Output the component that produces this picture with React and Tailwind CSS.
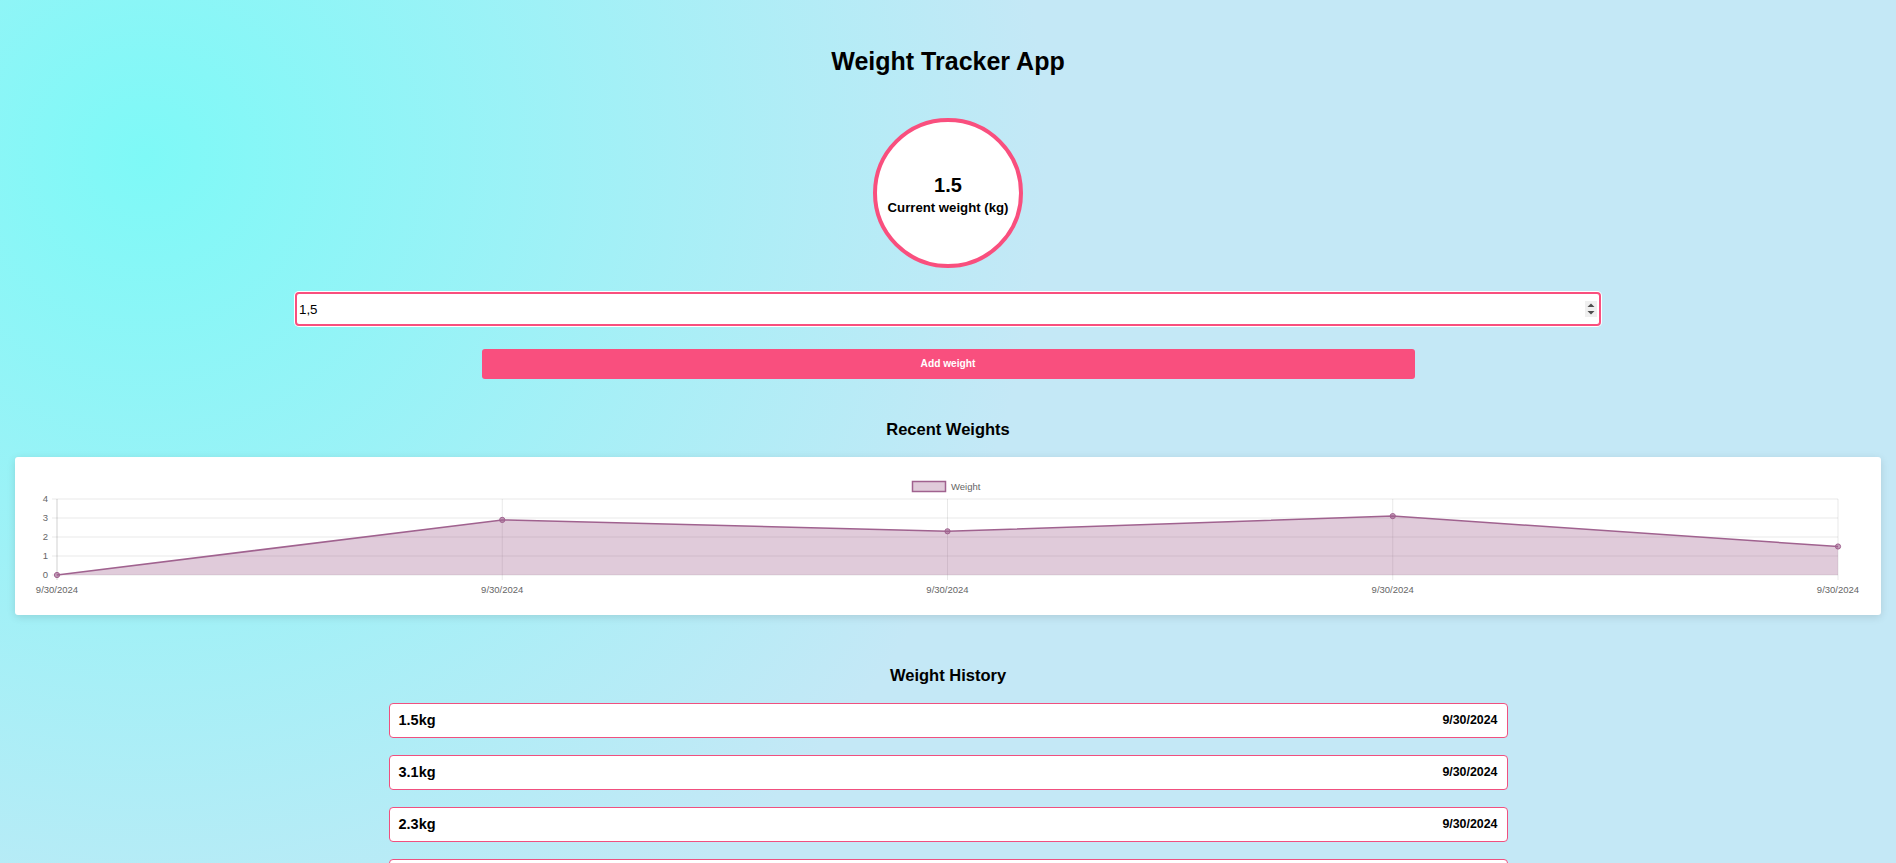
import React from "react";

const PINK = "#f94f7e";

const points = [0, 2.9, 2.3, 3.1, 1.5];
const history = [
  { w: "1.5", d: "9/30/2024" },
  { w: "3.1", d: "9/30/2024" },
  { w: "2.3", d: "9/30/2024" },
  { w: "2.9", d: "9/30/2024" },
  { w: "0", d: "9/30/2024" },
];

function WeightChart() {
  const left = 42;
  const right = 1823;
  const top = 42;
  const bottom = 118;
  const unit = (bottom - top) / 4;
  const step = (right - left) / (points.length - 1);
  const xs = points.map((_, i) => left + i * step);
  const ys = points.map((v) => bottom - v * unit);
  const line = xs.map((x, i) => `${x},${ys[i]}`).join(" ");
  const area = `${left},${bottom} ${line} ${right},${bottom}`;
  const stroke = "#a0628f";
  const fill = "rgba(160,98,143,0.33)";

  return (
    <svg className="block w-full h-[158px]" viewBox="0 0 1866 158">
      {/* legend */}
      <rect x="897.5" y="24.5" width="33" height="10" fill={fill} stroke={stroke} strokeWidth="1.5" />
      <text x="936" y="33" fontSize="9.5" fill="#666" fontFamily="Liberation Sans, Arial, sans-serif">Weight</text>

      {/* grid */}
      {[0, 1, 2, 3, 4].map((v) => (
        <g key={v}>
          <line x1={left - 5} x2={right} y1={bottom - v * unit} y2={bottom - v * unit} stroke="rgba(0,0,0,0.09)" />
          <text x={left - 9} y={bottom - v * unit + 3.3} fontSize="9.5" fill="#666" textAnchor="end" fontFamily="Liberation Sans, Arial, sans-serif">{v}</text>
        </g>
      ))}
      {xs.map((x, i) => (
        <g key={i}>
          <line x1={x} x2={x} y1={top} y2={bottom + 5} stroke={i === 0 ? "rgba(0,0,0,0.18)" : "rgba(0,0,0,0.09)"} />
          <text x={x} y={135.5} fontSize="9.5" fill="#666" textAnchor="middle" fontFamily="Liberation Sans, Arial, sans-serif">9/30/2024</text>
        </g>
      ))}

      {/* data */}
      <polygon points={area} fill={fill} />
      <polyline points={line} fill="none" stroke={stroke} strokeWidth="1.5" />
      {xs.map((x, i) => (
        <circle key={i} cx={x} cy={ys[i]} r="2.6" fill="rgba(160,98,143,0.6)" stroke={stroke} strokeWidth="1" />
      ))}
    </svg>
  );
}

export default function App() {
  return (
    <div className="min-h-screen bg-[radial-gradient(circle_at_145px_157px,#7ef9f7_0%,#c4e8f6_900px)] font-['Liberation_Sans',Arial,sans-serif] text-black pt-[47px] pb-10 flex flex-col items-center">
      <h1 className="text-[25px] leading-[28px] font-bold">Weight Tracker App</h1>

      <div className="mt-[43px] w-[150px] h-[150px] rounded-full bg-white border-4 border-[#f94f7e] flex flex-col items-center justify-center">
        <div className="text-[20px] leading-[23px] font-bold mt-[4px]">1.5</div>
        <div className="text-[13.2px] leading-[16px] font-bold mt-[3px]">Current weight (kg)</div>
      </div>

      <div className="relative mt-[24px] w-[1306px]">
        <input
          type="text"
          defaultValue="1,5"
          className="w-full h-[34px] bg-white border-2 border-[#f94f7e] rounded-[4px] shadow-[0_0_0_1px_#ffffff] outline-none px-[2px] text-[13.33px] text-black"
        />
        <div className="absolute right-[4px] top-[9px] w-[12px] h-[16px] bg-[#efefef]">
          <svg width="12" height="16" viewBox="0 0 12 16">
            <polygon points="2.5,6 6,2.5 9.5,6" fill="#4d4d4d" />
            <polygon points="2.5,10 6,13.5 9.5,10" fill="#4d4d4d" />
          </svg>
        </div>
      </div>

      <button
        className="mt-[23px] w-[933px] h-[30px] rounded-[3px] text-white text-[10.2px] font-bold"
        style={{ backgroundColor: PINK }}
      >
        Add weight
      </button>

      <h2 className="mt-[40px] text-[16.5px] leading-[20px] font-bold">Recent Weights</h2>

      <div className="self-stretch mx-[15px] mt-[18px] bg-white rounded-[3px] shadow-[0_2px_8px_rgba(0,0,0,0.12)]">
        <WeightChart />
      </div>

      <h2 className="mt-[50px] text-[16.5px] leading-[20px] font-bold">Weight History</h2>

      <ul className="mt-[18px] w-[1119px] flex flex-col gap-[17px]">
        {history.map((h, i) => (
          <li
            key={i}
            className="h-[35px] bg-white border border-[#f0507f] rounded-[4px] px-[9px] flex items-center justify-between"
          >
            <span className="text-[14.5px] font-bold">{h.w}kg</span>
            <span className="text-[12.4px] font-bold">{h.d}</span>
          </li>
        ))}
      </ul>
    </div>
  );
}
